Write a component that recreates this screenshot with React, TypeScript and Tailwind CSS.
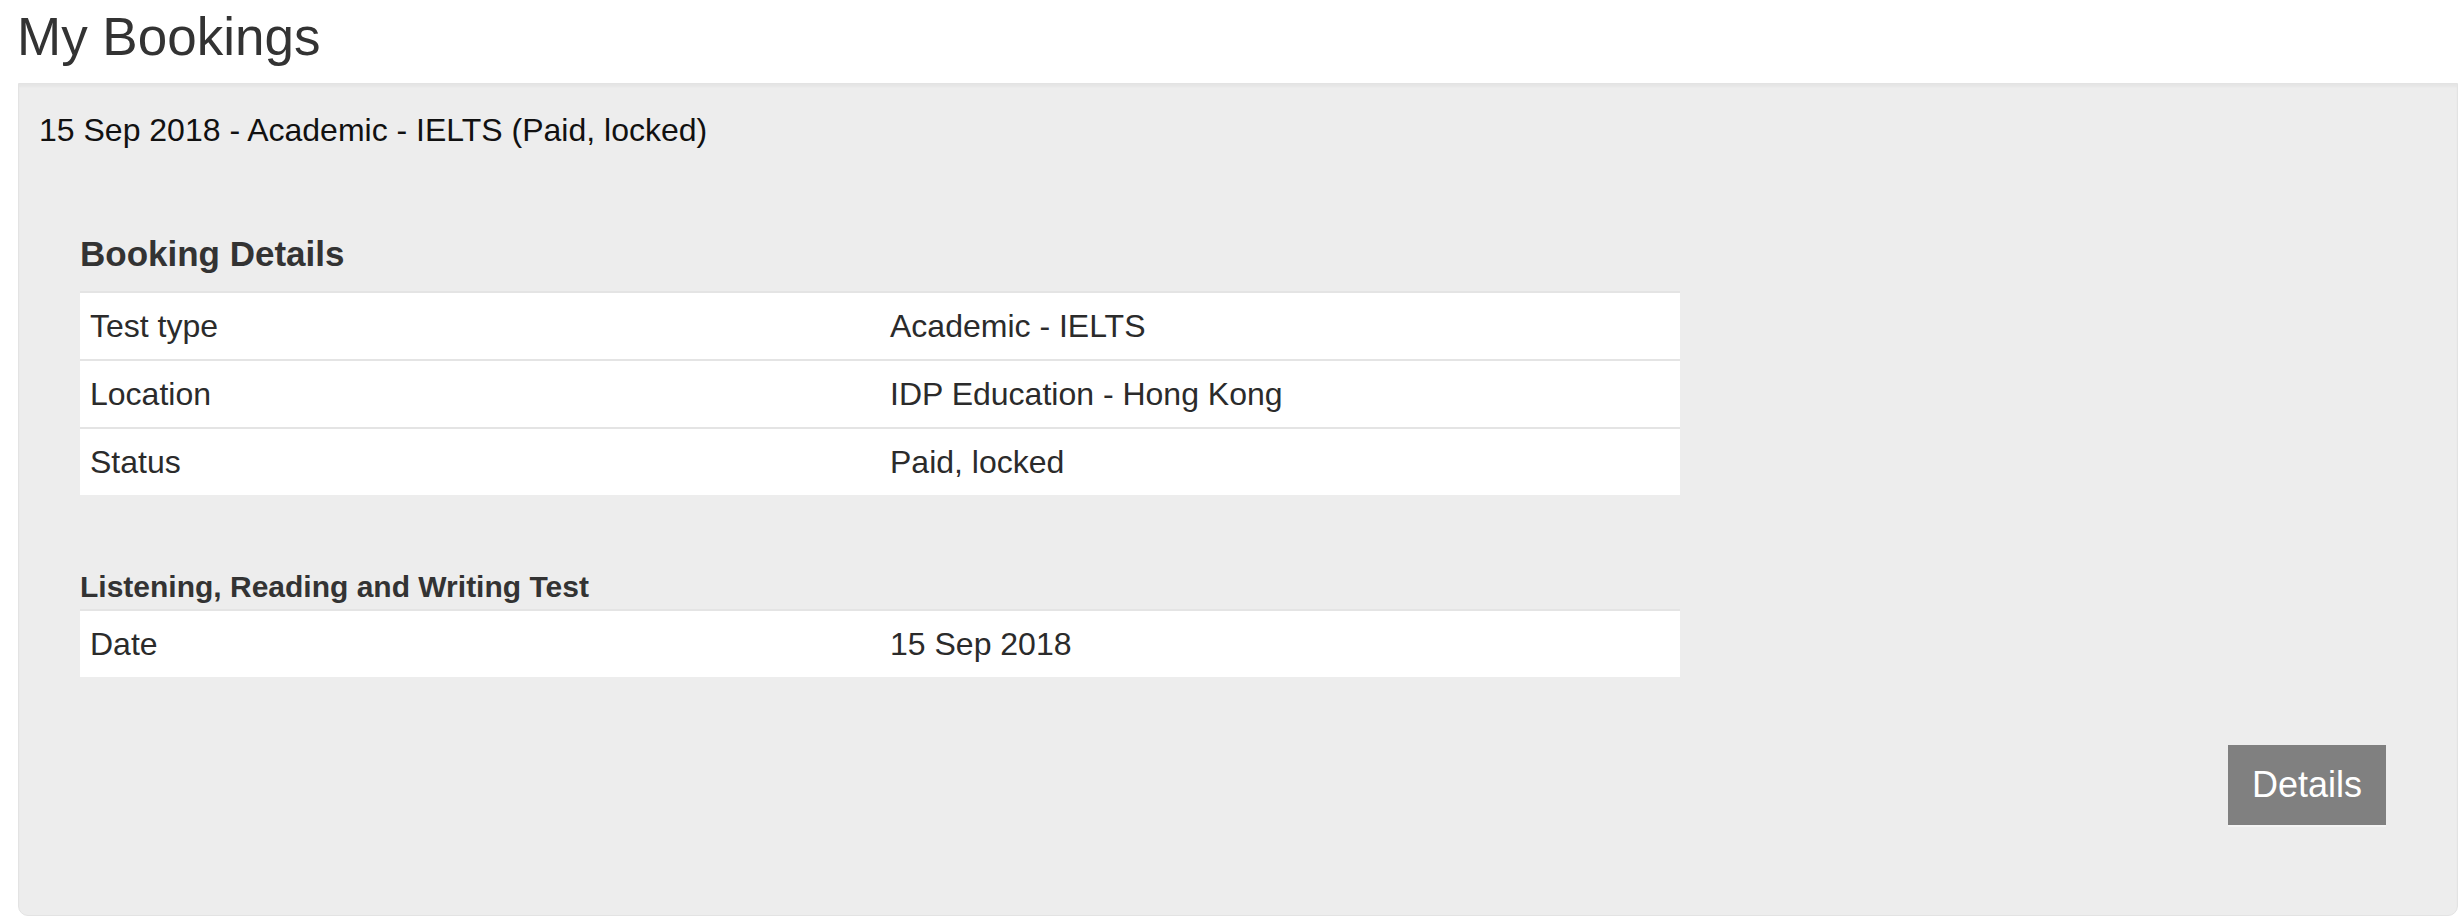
const bookingRows = [
  { label: "Test type", value: "Academic - IELTS" },
  { label: "Location", value: "IDP Education - Hong Kong" },
  { label: "Status", value: "Paid, locked" },
];

const testRows = [{ label: "Date", value: "15 Sep 2018" }];

function DetailTable({ rows }: { rows: { label: string; value: string }[] }) {
  return (
    <div className="w-[1600px] bg-white">
      {rows.map((row) => (
        <div
          key={row.label}
          className="grid grid-cols-2 h-[68px] border-t-2 border-[#e4e4e4] text-[32px] leading-[66px] text-[#2b2b2b]"
        >
          <div className="pl-[10px]">{row.label}</div>
          <div className="pl-[10px]">{row.value}</div>
        </div>
      ))}
    </div>
  );
}

export default function App() {
  return (
    <div className="min-h-screen bg-white font-['Liberation_Sans',Arial,sans-serif]">
      <h1 className="pl-[17px] pt-[8px] mb-[17px] text-[53px] leading-[58px] text-[#333]">
        My Bookings
      </h1>

      <div className="ml-[18px] mr-[4px] h-[833px] rounded-b-[10px] border border-[#e3e3e3] bg-[#ededed] shadow-[inset_0_3px_2px_rgba(0,0,0,0.03)]">
        <div className="pl-[20px] pt-[26px] text-[32px] leading-[40px] text-[#111]">
          15 Sep 2018 - Academic - IELTS (Paid, locked)
        </div>

        <div className="pl-[61px] pt-[84px]">
          <h3 className="text-[35px] leading-[40px] font-bold text-[#333] mb-[17px]">
            Booking Details
          </h3>
          <DetailTable rows={bookingRows} />

          <h4 className="mt-[75px] mb-[5px] text-[30px] leading-[34px] font-bold text-[#333]">
            Listening, Reading and Writing Test
          </h4>
          <DetailTable rows={testRows} />
        </div>

        <div className="flex justify-end pr-[71px] pt-[68px]">
          <button className="h-[80px] bg-[#808080] px-[24px] text-[36px] leading-[80px] text-white shadow-[0_2px_0_#f4f4f4]">
            Details
          </button>
        </div>
      </div>
    </div>
  );
}
